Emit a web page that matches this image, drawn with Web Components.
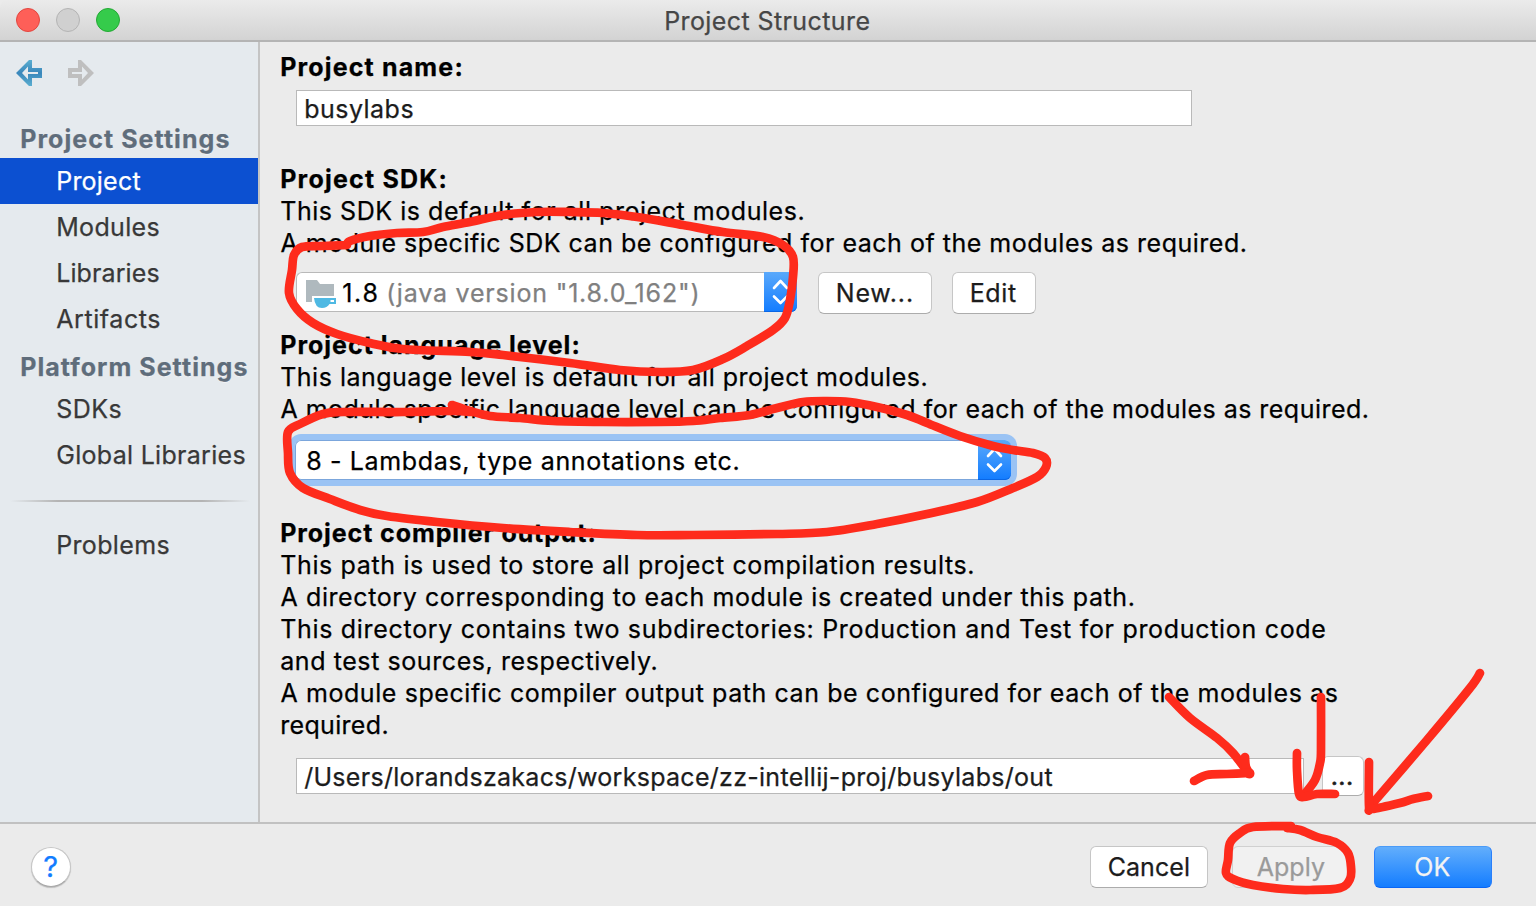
<!DOCTYPE html>
<html lang="en">
<head>
<meta charset="utf-8">
<title>Project Structure</title>
<style>
html,body{margin:0;padding:0}
body{width:1536px;height:906px;overflow:hidden;font-family:Inter,"Liberation Sans",sans-serif;font-size:25px;font-optical-sizing:none;background:#ebebeb}
</style>
</head>
<body>
<project-structure></project-structure>
<script>
const define = (name, html, setup) => {
  const tpl = document.createElement('template');
  tpl.innerHTML = html.trim();
  customElements.define(name, class extends HTMLElement {
    constructor() {
      super();
      this.attachShadow({mode: 'open'}).append(tpl.content.cloneNode(true));
    }
    connectedCallback() { if (setup) setup(this, this.shadowRoot); }
  });
};

/* A single line of text tracked so that its ink spans exactly `w` pixels. */
const ctx = document.createElement('canvas').getContext('2d');
define('text-run', `<style>:host{display:block;line-height:32px;height:32px;flex:none;-webkit-text-stroke:.25px currentColor}span{display:block;width:max-content;white-space:pre}</style><span><slot></slot></span>`, (el, root) => {
  const cs = getComputedStyle(el), span = root.querySelector('span');
  const w = +el.getAttribute('w'), text = el.textContent;
  ctx.font = `${cs.fontWeight} ${cs.fontSize} ${cs.fontFamily}`;
  const m = ctx.measureText(text);
  const lsb = -m.actualBoundingBoxLeft, rsb = m.width - m.actualBoundingBoxRight;
  const ink = span.getBoundingClientRect().width - lsb - rsb;
  span.style.letterSpacing = ((w - .8 - ink) / Math.max(1, text.length - 1)).toFixed(3) + 'px';
  span.style.marginLeft = (.2 - lsb).toFixed(2) + 'px';
  el.style.width = w + 'px';
});

define('title-bar', `
<style>
:host{display:grid;grid-template-columns:1fr auto 1fr;align-items:center;height:42px;box-sizing:border-box;border-bottom:2px solid #b4b4b4;background:linear-gradient(#ebebeb,#d3d3d3);color:#464646;border-top-left-radius:8px}
.lights{display:flex;gap:16px;padding-left:16px}
i{width:24px;height:24px;box-sizing:border-box;border-radius:50%;border:1px solid #e2463f;background:#fe5f58}
i:nth-child(2){background:#d0d0d0;border-color:#b4b4b4}
i:nth-child(3){background:#35cb4b;border-color:#23a934}
text-run{margin-top:2px}
</style>
<div class="lights"><i></i><i></i><i></i></div><text-run w="204">Project Structure</text-run><div></div>`);

define('nav-arrows', `
<style>:host{display:flex;gap:26px;padding:18px 0 0 16px;height:60px;box-sizing:border-box}svg{width:26px;height:26px;display:block}</style>
<svg viewBox="0 0 26 26"><defs><linearGradient id="g" x1="0" y1="0" x2="0" y2="1"><stop offset="0" stop-color="#5aaed0"/><stop offset=".5" stop-color="#3a87bb"/><stop offset="1" stop-color="#5aaed0"/></linearGradient></defs><path fill="url(#g)" fill-rule="evenodd" d="M0 13 13 0H16V8H26V18H16V26H13ZM6 13 12 19.5V14H22V12H12V6.5Z"/></svg>
<svg viewBox="0 0 26 26"><path fill="#bfbfbf" fill-rule="evenodd" d="M26 13 13 0H10V8H0V18H10V26H13ZM20 13 14 19.5V14H4V12H14V6.5Z"/></svg>`);

define('nav-group', `
<style>:host{display:flex;flex-direction:column;justify-content:center;padding-left:21px;height:38px;color:#5f6d7b;font-weight:700;text-shadow:0 1px 0 #f4f6f8}</style><slot></slot>`);

define('nav-item', `
<style>:host{display:flex;align-items:center;height:46px;padding-left:58px;color:#383838}:host([selected]){background:#0c50d1;color:#fff}</style><slot></slot>`);

define('side-bar', `
<style>
:host{display:block;width:258px;border-right:2px solid #c4c4c4;background:#e5eaee;flex:none}
.second{margin-top:6px}
hr{border:0;height:2px;margin:22px 8px 20px 10px;background:linear-gradient(90deg,#b4b4b400,#b4b4b4 20%,#b4b4b4 80%,#b4b4b400)}
</style>
<nav-arrows></nav-arrows>
<div style="height:18px"></div>
<nav-group><text-run w="209">Project Settings</text-run></nav-group>
<nav-item selected><text-run w="83">Project</text-run></nav-item>
<nav-item><text-run w="101">Modules</text-run></nav-item>
<nav-item><text-run w="101">Libraries</text-run></nav-item>
<nav-item><text-run w="104" style="margin-left:-2px">Artifacts</text-run></nav-item>
<nav-group class="second"><text-run w="227">Platform Settings</text-run></nav-group>
<nav-item><text-run w="64" style="margin-left:-1px">SDKs</text-run></nav-item>
<nav-item><text-run w="188" style="margin-left:-1px">Global Libraries</text-run></nav-item>
<hr>
<nav-item><text-run w="111">Problems</text-run></nav-item>`);

define('text-field', `
<style>:host{display:flex;align-items:center;box-sizing:border-box;height:36px;border:1px solid #b9b9b9;background:#fff;padding:2px 0 0 8px;color:#1c1c1c}</style><slot></slot>`);

define('push-button', `
<style>
:host{display:flex;align-items:center;justify-content:center;box-sizing:border-box;height:42px;border:1px solid #c6c6c6;border-bottom-color:#acacac;border-radius:6px;background:#fff;color:#1c1c1c;flex:none}
:host([disabled]){background:#f1f1f1;border-color:#d0d0d0;color:#9a9a9a}
:host([primary]){background:linear-gradient(#62aefc,#147dff);border-color:#4a9bf8 #2a7ffa #0a66f5;color:#f3f3f3}
</style><slot></slot>`);

define('combo-box', `
<style>
:host{display:flex;box-sizing:border-box;height:40px;border-radius:6px;background:#fff;color:#000}
.value{flex:1;display:flex;align-items:center;box-sizing:border-box;border:1px solid #b9b9b9;border-right:0;border-radius:6px 0 0 6px;padding:2px 0 0 11px}
.knob{width:33px;border-radius:0 6px 6px 0;background:linear-gradient(#5aa9fb,#127cff);box-shadow:inset 0 -1px #0a66e5}
svg{display:block}
:host([focused]){box-shadow:0 0 0 6px #9ac3f4}
:host([focused]) .value{border-color:#7ba6dc}
</style>
<div class="value"><slot></slot></div>
<div class="knob"><svg width="33" height="40" fill="none" stroke="#fff" stroke-width="2.6" stroke-linecap="round" stroke-linejoin="round"><path d="M10 16 16.5 9 23 16M10 24.500 16.500 31 23 24.500"/></svg></div>`);

define('sdk-icon', `
<style>:host{display:block;width:30px;height:30px}svg{display:block}</style>
<svg width="30" height="30"><path fill="#afb9be" d="M0 1H11L14 5H28V17H6V23H0Z"/><path fill="#4fb9e3" d="M8 19H30V25H23.500Q21 29 16 29Q9 29 8 19Z"/><path fill="#fff" d="M24.500 21H28V23H24.500Z"/></svg>`);

define('project-page', `
<style>
:host{display:block;flex:1;box-sizing:border-box;padding:9px 0 0 21px;color:#000}
b{display:block;font-weight:700}
.row{display:flex;align-items:flex-start}
.indent{margin-left:15px}
.a{margin-left:-.7px}
</style>
<b><text-run w="181">Project name:</text-run></b>
<text-field class="indent" style="width:896px;margin-top:7px"><text-run w="108">busylabs</text-run></text-field>
<b style="margin-top:37px"><text-run w="165">Project SDK:</text-run></b>
<text-run w="523">This SDK is default for all project modules.</text-run>
<text-run class="a" w="966">A module specific SDK can be configured for each of the modules as required.</text-run>
<div class="row indent" style="margin-top:13px">
<combo-box style="width:501px;margin-right:21px"><sdk-icon style="margin:1px 7px 0 -2px"></sdk-icon><text-run w="34">1.8</text-run><text-run w="310" style="color:#808080;margin-left:11px">(java version "1.8.0_162")</text-run></combo-box>
<push-button style="width:114px;margin-right:20px"><text-run w="75">New...</text-run></push-button>
<push-button style="width:84px"><text-run w="45">Edit</text-run></push-button>
</div>
<b style="margin-top:15px"><text-run w="298">Project language level:</text-run></b>
<text-run w="646">This language level is default for all project modules.</text-run>
<text-run class="a" w="1088">A module specific language level can be configured for each of the modules as required.</text-run>
<combo-box focused style="width:716px;margin:15px 0 0 14px"><text-run w="432">8 - Lambdas, type annotations etc.</text-run></combo-box>
<b style="margin-top:37px"><text-run w="314">Project compiler output:</text-run></b>
<text-run w="693">This path is used to store all project compilation results.</text-run>
<text-run class="a" w="854">A directory corresponding to each module is created under this path.</text-run>
<text-run w="1045">This directory contains two subdirectories: Production and Test for production code</text-run>
<text-run w="376">and test sources, respectively.</text-run>
<text-run class="a" w="1057">A module specific compiler output path can be configured for each of the modules as</text-run>
<text-run w="107">required.</text-run>
<div class="row indent" style="margin-top:15px">
<text-field style="width:1008px;margin:2px 18px 0 0;padding-left:7px"><text-run w="749">/Users/lorandszakacs/workspace/zz-intellij-proj/busylabs/out</text-run></text-field>
<push-button style="width:42px;height:40px"><text-run w="21" style="margin-left:-2px;-webkit-text-stroke-width:.6px">...</text-run></push-button>
</div>`);

define('dialog-footer', `
<style>
:host{display:flex;align-items:center;height:84px;box-sizing:border-box;border-top:2px solid #c1c1c1;padding:4px 44px 0 31px}
.help{display:flex;align-items:center;justify-content:center;width:40px;height:40px;box-sizing:border-box;border:1px solid #c6c6c6;border-bottom-color:#a8a8a8;border-radius:50%;background:#fff;color:#127cff;font-size:29px;margin-right:auto;box-shadow:0 1px 1px #0003}
push-button{width:118px}
push-button+push-button{margin-left:24px}
</style>
<div class="help"><text-run w="14">?</text-run></div>
<push-button><text-run w="81">Cancel</text-run></push-button>
<push-button disabled><text-run w="69">Apply</text-run></push-button>
<push-button primary><text-run w="36">OK</text-run></push-button>`);

/* Freehand marker strokes laid over the dialog, smoothed through their points. */
const strokes = [
 '347,245 350,241 370,236 397,233 423,232 443,227 470,222 503,215 537,212 570,212 603,213 637,217 683,225 723,232 763,237 783,245 793,257 793,277 790,300 785,318 773,330 747,346 723,359 693,370 660,372 620,370 570,363 503,355 470,352 403,349 370,343 337,334 313,323 297,309 289,293 292,270 294,255 302,247 323,246 347,245',
 '452,405 470,411 490,416 520,418 553,421 603,422 660,422 693,421 720,418 750,415 777,408 803,402 827,401 850,402 877,407 907,415 927,423 960,436 993,446 1013,450 1033,453 1045,458 1046,467 1037,477 1013,488 977,502 927,514 877,524 827,532 777,534 693,535 637,535 570,532 503,528 437,522 387,516 360,510 330,499 303,488 290,473 288,453 288,432 300,424 323,414 343,412 403,412 452,411 470,412',
 '1169,697 1190,718 1217,738 1233,753 1249,774',
 '1245,757 1246,767 1250,774',
 '1194,781 1207,775 1227,774 1250,773',
 '1321,697 1321,750 1320,763 1315,780 1303,796',
 '1297,753 1297,770 1299,794 1304,797 1317,794 1335,794',
 '1480,673 1470,688 1427,740 1373,803',
 '1369,762 1369,806 1372,809 1400,803 1413,799 1428,796',
 '1291,826 1253,827 1240,833 1230,843 1228,860 1226,873 1233,879 1253,885 1283,889 1310,890 1340,888 1350,879 1351,867 1348,853 1337,843 1317,837 1300,830 1287,828'
];
define('marker-layer', `
<style>:host{position:absolute;left:0;top:0;pointer-events:none}svg{display:block}</style>
<svg width="1536" height="906" fill="none" stroke="#fe2b1c" stroke-width="8.700" stroke-linecap="round" stroke-linejoin="round"></svg>`, (el, root) => {
  const svg = root.querySelector('svg');
  for (const s of strokes) {
    const p = s.split(' ').map(q => q.split(',').map(Number));
    let d = 'M' + p[0];
    for (let i = 0; i < p.length - 1; i++) {
      const a = p[i - 1] || p[i], b = p[i], c = p[i + 1], e = p[i + 2] || c;
      d += `C${b[0] + (c[0] - a[0]) / 6},${b[1] + (c[1] - a[1]) / 6} ${c[0] - (e[0] - b[0]) / 6},${c[1] - (e[1] - b[1]) / 6} ${c}`;
    }
    const path = document.createElementNS('http://www.w3.org/2000/svg', 'path');
    path.setAttribute('d', d);
    svg.append(path);
  }
});

define('project-structure', `
<style>
:host{display:flex;flex-direction:column;width:1536px;height:906px;position:relative;background:#ebebeb;overflow:hidden}
main{display:flex;height:780px}
</style>
<title-bar></title-bar>
<main><side-bar></side-bar><project-page></project-page></main>
<dialog-footer></dialog-footer>
<marker-layer></marker-layer>`);
</script>
</body>
</html>
